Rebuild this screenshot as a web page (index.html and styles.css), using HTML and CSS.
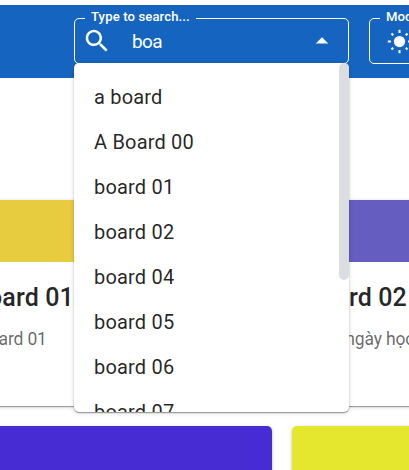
FILE: index.html
```
<!DOCTYPE html>
<html lang="en">
<head>
<meta charset="utf-8">
<title>Boards</title>
<link rel="stylesheet" href="styles.css">
</head>
<body>
<header class="bar">
  <div class="field search">
    <span class="label">Type to search...</span>
    <svg class="search-icon" viewBox="0 0 24 24"><path d="M15.5 14h-.79l-.28-.27C15.41 12.59 16 11.11 16 9.5 16 5.91 13.09 3 9.5 3S3 5.91 3 9.5 5.91 16 9.5 16c1.61 0 3.09-.59 4.23-1.57l.27.28v.79l5 4.99L20.49 19l-4.99-5zm-6 0C7.01 14 5 11.99 5 9.5S7.01 5 9.5 5 14 7.01 14 9.5 11.99 14 9.5 14z"/></svg>
    <span class="query">boa</span>
    <svg class="arrow" viewBox="0 0 24 24"><path d="M7 14l5-5 5 5z"/></svg>
    <ul class="menu">
      <li>a board</li>
      <li>A Board 00</li>
      <li>board 01</li>
      <li>board 02</li>
      <li>board 04</li>
      <li>board 05</li>
      <li>board 06</li>
      <li>board 07</li>
    </ul>
    <span class="thumb"></span>
  </div>
  <div class="field mode">
    <span class="label">Mode</span>
    <svg class="sun" viewBox="0 0 24 24"><circle cx="12" cy="12" r="5.400"/><path d="M12 .8v3M12 20.200v3M.8 12h3M20.200 12h3M4.300 4.300l1.700 1.700M18 18l1.700 1.700M4.300 19.700l1.700-1.700M18 6l1.700-1.700"/></svg>
  </div>
</header>
<main class="boards">
  <article class="card">
    <div class="cover gold"></div>
    <div class="content"><h2>Board 01</h2><p>board 01</p></div>
  </article>
  <article class="card">
    <div class="cover violet"></div>
    <div class="content"><h2>Board 02</h2><p>Mỗi ngày học</p></div>
  </article>
  <article class="card"><div class="cover indigo"></div></article>
  <article class="card"><div class="cover lime"></div></article>
</main>
</body>
</html>
```

FILE: styles.css
```
* { box-sizing: border-box; }
body {
  margin: 0;
  padding-top: 5px;
  height: 470px;
  overflow: hidden;
  background: #fff;
  font-family: Roboto, sans-serif;
  color: rgba(0, 0, 0, .87);
}
.bar {
  display: flex;
  align-items: flex-start;
  gap: 20px;
  width: 640px;
  height: 73px;
  padding: 13px 0 0 74px;
  background: #1565c0;
}
.field {
  position: relative;
  display: flex;
  align-items: center;
  height: 46px;
  border: 1px solid #fff;
  border-radius: 5px;
  color: #fff;
}
.search { width: 275px; padding: 0 11px 0 7px; }
.mode { width: 150px; padding-left: 17px; }
.label {
  position: absolute;
  top: -11px;
  left: 10px;
  padding: 0 6px;
  background: #1565c0;
  font-size: 13.1px;
  line-height: 18px;
  letter-spacing: .12px;
  font-weight: 500;
}
svg { flex: none; fill: currentColor; }
.search-icon { width: 30px; height: 30px; }
.query { flex: 1; margin: 0 0 0 20px; font-size: 19px; letter-spacing: -.6px; }
.arrow { width: 30px; height: 30px; }
.sun { width: 25px; height: 25px; margin-top: 1px; stroke: currentColor; stroke-width: 1.9; }
.sun circle { stroke: none; }
.menu {
  position: absolute;
  z-index: 2;
  top: 44px;
  left: -1px;
  width: 275px;
  height: 349px;
  margin: 0;
  padding: 12px 0;
  overflow: hidden;
  list-style: none;
  border-radius: 5px;
  background: #fff;
  color: rgba(0, 0, 0, .87);
  box-shadow: 0 1px 1px rgba(0, 0, 0, .35), 0 1px 4px rgba(0, 0, 0, .18);
  font-size: 20px;
  letter-spacing: .19px;
}
.menu li { height: 45px; padding-left: 20px; line-height: 45px; }
.thumb {
  position: absolute;
  z-index: 3;
  top: 44px;
  right: -1px;
  width: 10px;
  height: 217px;
  border-radius: 5px;
  background: #dcdde1;
}
.boards {
  display: grid;
  grid-template-columns: 313px 313px;
  gap: 20px;
  margin: 122px 0 0 -41px;
}
.card {
  height: 206px;
  overflow: hidden;
  border-radius: 5px;
  background: #fff;
  box-shadow: 0 1px 1px rgba(0, 0, 0, .35), 0 1px 4px rgba(0, 0, 0, .18);
}
.cover { height: 62px; }
.gold { background: #e8cc3f; }
.violet { background: #655dbf; }
.indigo { background: #472bd3; }
.lime { background: #e4e72e; }
.content { padding: 20px; }
h2 {
  margin: 0 0 10px -7px;
  font-size: 25px;
  line-height: 32px;
  font-weight: 500;
  letter-spacing: .15px;
}
p {
  margin: 0;
  font-size: 17.5px;
  line-height: 30px;
  letter-spacing: -.15px;
  color: rgba(0, 0, 0, .6);
}
```
